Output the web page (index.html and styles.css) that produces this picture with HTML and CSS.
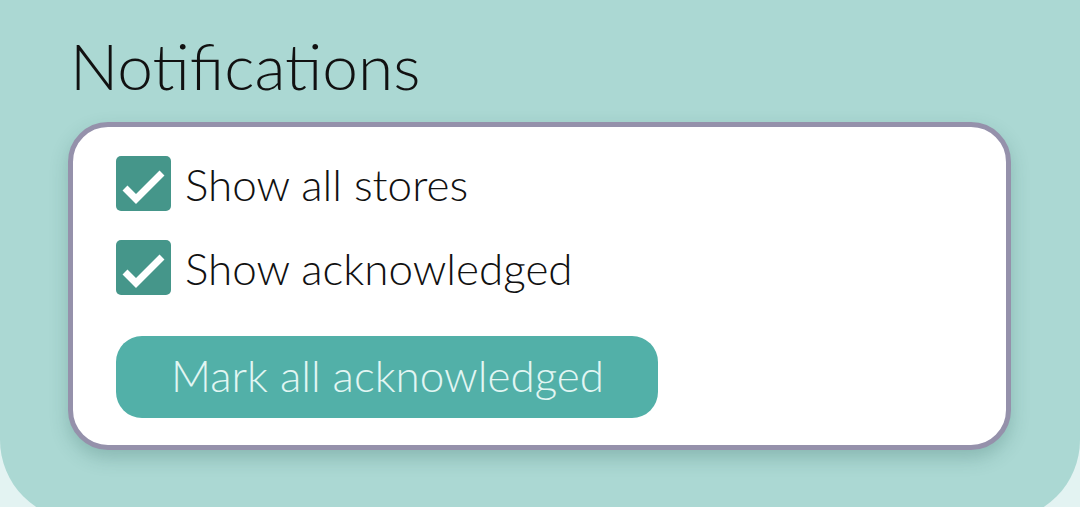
FILE: index.html
```html
<!DOCTYPE html>
<html lang="en">
<head>
  <meta charset="UTF-8" />
  <title>Notifications</title>
  <link rel="stylesheet" href="styles.css">
</head>
<body>
  <div class="panel">
    <h1>Notifications</h1>
    <div class="card">
      <label class="check-row">
        <span class="box">
          <svg viewBox="0 0 55 55" width="55" height="55"><path d="M9 32 L20 43 L46 17" /></svg>
        </span>
        Show all stores
      </label>
      <label class="check-row">
        <span class="box">
          <svg viewBox="0 0 55 55" width="55" height="55"><path d="M9 32 L20 43 L46 17" /></svg>
        </span>
        Show acknowledged
      </label>
      <button class="ack-btn">Mark all acknowledged</button>
    </div>
  </div>
</body>
</html>
```

FILE: styles.css
```css
body { margin:0; background:#e3f3f2; font-family:'Lato','Open Sans',sans-serif; color:#111; }
.panel { background:#abd8d3; height:520px; border-radius:0 0 80px 80px; padding-top:28px; box-sizing:border-box; }
h1 { margin:0 0 18px 70px; font-size:64px; font-weight:300; line-height:76px; color:#111; }
.card { margin-left:68px; width:943px; box-sizing:border-box; background:white; border:5px solid #9591ab; border-radius:40px; padding:29px 43px 27px; box-shadow:0 8px 18px rgba(40,90,85,0.25); }
.check-row { display:flex; align-items:center; gap:14px; font-size:44px; font-weight:300; height:55px; margin-bottom:29px; }
.check-row:nth-of-type(2) { margin-bottom:41px; }
.box { width:55px; height:55px; border-radius:5px; background:#45968a; display:block; flex:none; }
.box svg { display:block; }
.box path { fill:none; stroke:white; stroke-width:7; }
.ack-btn { display:block; width:542px; height:82px; border:none; border-radius:26px; background:#52b0a8; color:#e2f6f3; font-family:inherit; font-size:44px; font-weight:300; text-align:left; padding:0 0 4px 55px; cursor:pointer; }
```
